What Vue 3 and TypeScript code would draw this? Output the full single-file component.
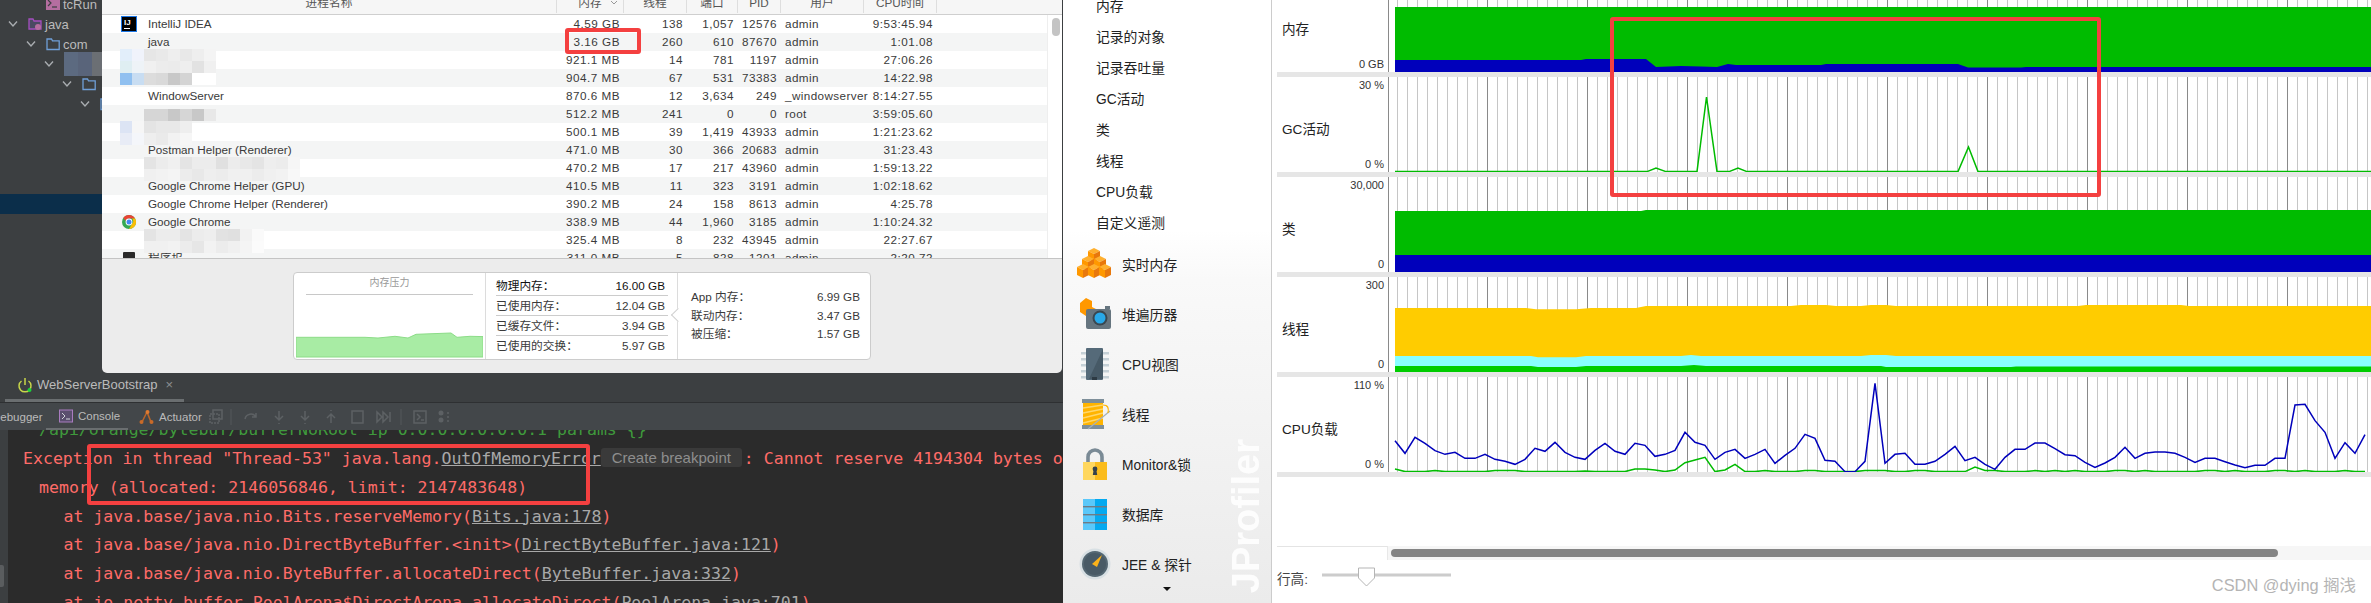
<script setup lang="ts">
type Proc = {
  icon?: "ij" | "chrome" | "dock";
  name: string;
  mem: string;
  threads: string;
  ports: string;
  pid: string;
  user: string;
  cpu: string;
};

// 活动监视器的进程表（被打码的行 name 留空）
const procs: Proc[] = [
  { icon: "ij", name: "IntelliJ IDEA", mem: "4.59 GB", threads: "138", ports: "1,057", pid: "12576", user: "admin", cpu: "9:53:45.94" },
  { name: "java", mem: "3.16 GB", threads: "260", ports: "610", pid: "87670", user: "admin", cpu: "1:01.08" },
  { name: "", mem: "921.1 MB", threads: "14", ports: "781", pid: "1197", user: "admin", cpu: "27:06.26" },
  { name: "", mem: "904.7 MB", threads: "67", ports: "531", pid: "73383", user: "admin", cpu: "14:22.98" },
  { name: "WindowServer", mem: "870.6 MB", threads: "12", ports: "3,634", pid: "249", user: "_windowserver", cpu: "8:14:27.55" },
  { name: "", mem: "512.2 MB", threads: "241", ports: "0", pid: "0", user: "root", cpu: "3:59:05.60" },
  { name: "", mem: "500.1 MB", threads: "39", ports: "1,419", pid: "43933", user: "admin", cpu: "1:21:23.62" },
  { name: "Postman Helper (Renderer)", mem: "471.0 MB", threads: "30", ports: "366", pid: "20683", user: "admin", cpu: "31:23.43" },
  { name: "", mem: "470.2 MB", threads: "17", ports: "217", pid: "43960", user: "admin", cpu: "1:59:13.22" },
  { name: "Google Chrome Helper (GPU)", mem: "410.5 MB", threads: "11", ports: "323", pid: "3191", user: "admin", cpu: "1:02:18.62" },
  { name: "Google Chrome Helper (Renderer)", mem: "390.2 MB", threads: "24", ports: "158", pid: "8613", user: "admin", cpu: "4:25.78" },
  { icon: "chrome", name: "Google Chrome", mem: "338.9 MB", threads: "44", ports: "1,960", pid: "3185", user: "admin", cpu: "1:10:24.32" },
  { name: "", mem: "325.4 MB", threads: "8", ports: "232", pid: "43945", user: "admin", cpu: "22:27.67" },
  { icon: "dock", name: "程序坞", mem: "311.0 MB", threads: "5", ports: "828", pid: "1201", user: "admin", cpu: "2:20.72" },
];

// 马赛克：left/top 相对表格内容区
const mosaics = [
  {
    left: 18,
    top: 34,
    cells: [
      ["#e2eefa", "#f0f3fb", "#e6e6e6", "#e9e9e9", "#eeeeee", "#e8e8e8", "#eeeeee", "#f4f4f4"],
      ["#dfeef2", "#eef3f7", "#f0f0f0", "#ececec", "#ebebeb", "#eeeeee", "#e2e2e2", "#f0f0f0"],
      ["#90c0f0", "#c8ddf2", "#dcdcdc", "#d9d9d9", "#c8c8c8", "#d4d4d4", "#ffffff", "#ffffff"],
    ],
  },
  {
    left: 42,
    top: 94,
    cells: [["#d6d6d6", "#d6d6d6", "#c8c8c8", "#d6d6d6", "#c8c8c8", "#e8e8e8"]],
  },
  {
    left: 18,
    top: 106,
    cells: [
      ["#dce4f4", "#f6f6f6", "#e4e4e4", "#e8e8e8", "#e8e8e8", "#eeeeee"],
      ["#e8ecf6", "#f4f6fa", "#eeeeee", "#eaeaea", "#f2f2f2", "#f6f6f6"],
    ],
  },
  {
    left: 42,
    top: 142,
    cells: [
      ["#e4e4e4", "#ececec", "#f0f0f0", "#e4e4e4", "#ececec", "#ececec", "#e0e0e0", "#ececec", "#e8e8e8", "#e4e4e4", "#eeeeee", "#ececec", "#f6f6f6"],
      ["#f0f0f0", "#f2f2f2", "#f4f4f4", "#ececec", "#e8e8e8", "#eeeeee", "#ececec", "#f0f0f0", "#f0f0f0", "#ececec", "#f0f0f0", "#f2f2f2", "#f8f8f8"],
    ],
  },
  {
    left: 42,
    top: 214,
    cells: [
      ["#e4e4e4", "#ececec", "#ececec", "#e4e4e4", "#ececec", "#eeeeee", "#e2e2e2", "#e0e0e0", "#f2f2f2", "#fafafa"],
      ["#f0f0f0", "#f0f0f0", "#f2f2f2", "#ececec", "#e6e6e6", "#f2f2f2", "#ececec", "#f0f0f0", "#f4f4f4", "#fbfbfb"],
    ],
  },
];

const physStats = [
  { label: "物理内存：", value: "16.00 GB" },
  { label: "已使用内存：", value: "12.04 GB" },
  { label: "已缓存文件：", value: "3.94 GB" },
  { label: "已使用的交换：", value: "5.97 GB" },
];
const appStats = [
  { label: "App 内存：", value: "6.99 GB" },
  { label: "联动内存：", value: "3.47 GB" },
  { label: "被压缩：", value: "1.57 GB" },
];

const tree = [
  { depth: 1, kind: "run", label: "tcRun", arrow: false },
  { depth: 0, kind: "src", label: "java", arrow: true },
  { depth: 1, kind: "folder", label: "com", arrow: true },
  { depth: 2, kind: "blur", label: "", arrow: true },
  { depth: 3, kind: "folder", label: "", arrow: true },
  { depth: 4, kind: "folder", label: "", arrow: true },
];

const subItems = ["内存", "记录的对象", "记录吞吐量", "GC活动", "类", "线程", "CPU负载", "自定义遥测"];
const navItems = [
  { key: "cubes", label: "实时内存" },
  { key: "camera", label: "堆遍历器" },
  { key: "chip", label: "CPU视图" },
  { key: "spool", label: "线程" },
  { key: "lock", label: "Monitor&锁" },
  { key: "db", label: "数据库" },
  { key: "gauge", label: "JEE & 探针" },
];
const cubes = [
  [17, 0],
  [11, 8],
  [23, 8],
  [6, 16],
  [17, 16],
  [28, 16],
];

// 图表坐标：x 为页面横坐标，y 为页面纵坐标，这里换算成每行自己的坐标
const left = 1388;
const pts = (top: number, list: number[][]) =>
  list.map(([x, y]) => `${x - left},${y - top}`).join(" ");

const cpuHead = [
  572, 610, 562, 580, 602, 613, 607, 625, 625, 613, 628, 634, 643, 628, 595, 604, 577, 607, 622, 628, 601, 580, 604,
  613, 580, 586, 619, 613, 601, 547, 577, 586, 628, 607, 598, 625, 613, 598, 640, 616, 595, 553, 565, 631, 634, 665,
  665, 634, 400, 640, 613, 610, 643, 643, 634, 613, 589,
].map((v) => 250 + v / 3);
const cpuTail = [
  272, 262, 283, 298, 262, 238, 238, 219, 219, 236, 254, 257, 277, 292, 279, 262, 232, 265, 250, 246, 246, 250, 262,
  277, 265, 265, 275, 285, 293, 286, 286, 265, 265, 105, 103, 152, 187, 265, 218, 250, 194,
].map((v) => 370 + v / 3);
const cpuLine = [...cpuHead, ...cpuTail].map((y, i) => [1394 + i * 10, y]);

const gcBumps: Record<number, number> = {
  0: 469, 4: 470.5, 10: 470.6, 11: 470.6, 12: 470.6, 19: 471, 24: 469, 25: 469, 26: 470, 28: 470, 29: 462.7,
  30: 460, 31: 457.3, 33: 470, 34: 464.3, 37: 470.5, 41: 470.5, 42: 470.5, 47: 470.6, 48: 470.6, 49: 470.6,
  52: 470.6, 53: 470.6, 58: 467, 59: 470.5, 60: 470.5, 64: 470.6, 66: 470.5, 68: 470.5, 72: 470.6, 73: 470.6,
  75: 470.6, 81: 470.6, 82: 470.6, 84: 470.5, 88: 470.6, 89: 470.6, 91: 470.6, 95: 470.6,
};
const cpuGc = cpuLine.map(([x], i) => [x, gcBumps[i] ?? 471.6]);

const rows = [
  {
    name: "内存", top: -23, max: "", min: "0 GB",
    fills: [
      { color: "#00bb00", points: pts(-23, [[1394, 7], [2371, 7], [2371, 72], [1394, 72]]) },
      {
        color: "#0000bb",
        points: pts(-23, [
          [1394, 60], [1580, 60], [1585, 59], [1645, 59], [1655, 67], [1680, 66], [1700, 66.5], [1716, 67], [1727, 64],
          [1735, 65], [1820, 65], [1825, 64], [1957, 64], [1967, 67.5], [2020, 67.5], [2025, 67], [2371, 67], [2371, 72], [1394, 72],
        ]),
      },
    ],
    lines: [],
  },
  {
    name: "GC活动", top: 77, max: "30 %", min: "0 %",
    fills: [],
    lines: [
      {
        color: "#00bb00",
        points: pts(77, [
          [1394, 171.6], [1646, 171.6], [1655, 168], [1665, 171.6], [1696, 171.6], [1705.5, 97], [1716, 171.6], [1728, 171.6],
          [1737, 168], [1746, 171.6], [1957, 171.6], [1967.5, 147], [1977, 171.6], [2371, 171.6],
        ]),
      },
    ],
  },
  {
    name: "类", top: 177, max: "30,000", min: "0",
    fills: [
      { color: "#00bb00", points: pts(177, [[1394, 211], [1640, 211], [1645, 210], [2371, 210], [2371, 272], [1394, 272]]) },
      { color: "#0000bb", points: pts(177, [[1394, 255], [2371, 255], [2371, 272], [1394, 272]]) },
    ],
    lines: [],
  },
  {
    name: "线程", top: 277, max: "300", min: "0",
    fills: [
      {
        color: "#ffcc00",
        points: pts(277, [
          [1394, 308], [1525, 308], [1535, 309.3], [1575, 309.3], [1590, 308], [1635, 308], [1645, 306], [1790, 306], [1800, 305],
          [1825, 305], [1835, 306], [1860, 306], [1870, 305], [1885, 305], [1895, 306], [2077, 306], [2085, 305], [2180, 305],
          [2188, 306], [2371, 306], [2371, 372], [1394, 372],
        ]),
      },
      {
        color: "#88ffff",
        points: pts(277, [
          [1394, 356], [1530, 356], [1537, 357.3], [1575, 357.3], [1585, 356], [1680, 356], [1690, 355], [1700, 356], [1860, 356],
          [1870, 355], [1885, 355], [1895, 356], [2371, 356], [2371, 372], [1394, 372],
        ]),
      },
      {
        color: "#00cc00",
        points: pts(277, [
          [1394, 366], [1530, 366], [1537, 367], [1575, 367], [1585, 366], [1680, 366], [1693, 365], [1705, 366], [1880, 366],
          [1885, 367], [2010, 367], [2015, 366.6], [2371, 366.6], [2371, 372], [1394, 372],
        ]),
      },
    ],
    lines: [],
  },
  {
    name: "CPU负载", top: 377, max: "110 %", min: "0 %",
    fills: [],
    lines: [
      { color: "#00bb00", points: pts(377, cpuGc) },
      { color: "#0000bb", points: pts(377, cpuLine) },
    ],
  },
];
</script>

<template>
  <div class="page">
    <!-- 左半：IDEA + 盖在上面的活动监视器 -->
    <section class="ide">
      <div class="ide-top">
        <div class="tree">
          <div v-for="(item, i) in tree" :key="i" class="tree-row" :style="{ paddingLeft: 7 + item.depth * 18 + 'px' }">
            <svg class="chev" viewBox="0 0 12 8" width="12" height="8">
              <polyline v-if="item.arrow" points="2,1.5 6,6 10,1.5" fill="none" stroke="#a9adb0" stroke-width="1.4" />
            </svg>
            <svg v-if="item.kind === 'run'" class="tree-ico" viewBox="0 0 14 14" width="14" height="14">
              <rect y="1" width="14" height="12" fill="#b56ea0" />
              <polyline points="2,3 5,6 2,9" fill="none" stroke="#3c3f41" stroke-width="1.2" />
              <line x1="6" y1="10" x2="11" y2="10" stroke="#3c3f41" stroke-width="1.2" />
            </svg>
            <svg v-else-if="item.kind === 'src'" class="tree-ico" viewBox="0 0 14 14" width="14" height="14">
              <path d="M1 12V2h4l1 2h7v8z" fill="#4b4a63" stroke="#a54ec0" stroke-width="1.3" />
              <circle cx="10" cy="10" r="3" fill="#b56ea0" />
            </svg>
            <svg v-else-if="item.kind === 'folder'" class="tree-ico" viewBox="0 0 14 14" width="14" height="14">
              <path d="M1 12.5V2h4.5l1 1.8h6.7v8.7z" fill="none" stroke="#6f9fd8" stroke-width="1.3" />
            </svg>
            <div v-else class="tree-blur">
              <i></i><i></i><i></i><i></i>
            </div>
            <span>{{ item.label }}</span>
          </div>
          <div class="tree-selected"></div>
        </div>

        <div class="win">
          <div class="win-head table-grid">
            <span class="h-name">进程名称</span>
            <span class="h-mem">内存<svg viewBox="0 0 8 5" width="8" height="5"><polyline points="1,1 4,4 7,1" fill="none" stroke="#999" /></svg></span>
            <span>线程</span>
            <span>端口</span>
            <span>PID</span>
            <span>用户</span>
            <span>CPU时间</span>
          </div>
          <div class="win-body">
            <div class="proc-list">
              <div v-for="p in procs" :key="p.pid" class="proc table-grid">
                <span class="p-icon">
                  <svg v-if="p.icon === 'ij'" viewBox="0 0 16 16" width="16" height="16">
                    <rect x="0.5" y="0.5" width="15" height="15" fill="#000" stroke="#1e78e6" />
                    <text x="3" y="9" fill="#fff" font-size="8" font-weight="700" font-family="Liberation Sans">IJ</text>
                    <rect x="3" y="12" width="6" height="1" fill="#fff" />
                  </svg>
                  <svg v-else-if="p.icon === 'chrome'" viewBox="0 0 16 16" width="16" height="16">
                    <circle cx="8" cy="8" r="7" fill="#34a853" />
                    <path d="M8 1a7 7 0 0 1 6.1 3.5H8a3.5 3.5 0 0 0-3.3 2.3L2.2 4A7 7 0 0 1 8 1z" fill="#ea4335" />
                    <path d="M14.1 4.5A7 7 0 0 1 8 15l3-5.2a3.5 3.5 0 0 0 0-5.3z" fill="#fbbc05" />
                    <circle cx="8" cy="8" r="3.4" fill="#fff" />
                    <circle cx="8" cy="8" r="2.5" fill="#4285f4" />
                  </svg>
                  <svg v-else-if="p.icon === 'dock'" viewBox="0 0 16 16" width="16" height="16">
                    <rect x="2" y="2" width="12" height="12" rx="1" fill="#2a2a2a" />
                  </svg>
                </span>
                <span class="p-name">{{ p.name }}</span>
                <span class="num">{{ p.mem }}</span>
                <span class="num">{{ p.threads }}</span>
                <span class="num">{{ p.ports }}</span>
                <span class="num">{{ p.pid }}</span>
                <span class="p-user">{{ p.user }}</span>
                <span class="num">{{ p.cpu }}</span>
              </div>
              <div
                v-for="(m, i) in mosaics"
                :key="i"
                class="mosaic"
                :style="{ left: m.left + 'px', top: m.top + 'px' }"
              >
                <div v-for="(line, j) in m.cells" :key="j" class="mosaic-line">
                  <i v-for="(c, k) in line" :key="k" :style="{ background: c }"></i>
                </div>
              </div>
            </div>
            <div class="win-scroll"><div class="win-thumb"></div></div>
          </div>
          <div class="win-foot">
            <div class="mem-card">
              <div class="pressure">
                <div class="pressure-title">内存压力</div>
                <svg class="pressure-graph" viewBox="0 0 187 26" width="187" height="26">
                  <polygon
                    points="0,5.3 36,5.3 69,5.3 82,6 99,4.3 112,6 120,2.3 155,1 161,5.3 174,4.3 187,4.6 187,25 0,25"
                    fill="#a8eca4"
                    stroke="#8cdc88"
                  />
                </svg>
              </div>
              <div class="phys">
                <div v-for="s in physStats" :key="s.label" class="phys-row">
                  <span>{{ s.label }}</span><span>{{ s.value }}</span>
                </div>
              </div>
              <div class="app">
                <div v-for="s in appStats" :key="s.label" class="app-row">
                  <span>{{ s.label }}</span><span>{{ s.value }}</span>
                </div>
              </div>
            </div>
          </div>
        </div>
      </div>

      <div class="tool">
        <div class="tool-tabs">
          <div class="run-tab">
            <svg viewBox="0 0 16 16" width="16" height="16">
              <path d="M4.5 4a6 6 0 1 0 7 0" fill="none" stroke="#c8d64a" stroke-width="1.5" />
              <line x1="8" y1="1" x2="8" y2="8" stroke="#c8d64a" stroke-width="1.5" />
              <circle cx="12.5" cy="13" r="2" fill="#19d43a" />
            </svg>
            <span>WebServerBootstrap</span>
            <b>×</b>
          </div>
        </div>
        <div class="tool-strip">
          <span class="strip-cut">Debugger</span>
          <div class="strip-tab strip-active">
            <svg viewBox="0 0 14 14" width="14" height="14">
              <rect x="0.5" y="1" width="13" height="12" fill="#5a4e6e" stroke="#a97cc0" />
              <polyline points="3,4 6,7 3,10" fill="none" stroke="#d0d4d8" />
              <line x1="7" y1="10" x2="11" y2="10" stroke="#d0d4d8" />
            </svg>
            <span>Console</span>
          </div>
          <div class="strip-tab strip-actuator">
            <svg viewBox="0 0 15 16" width="15" height="16">
              <path d="M8 3 3 13M8 3l4 10M3 13h0" stroke="#b8652a" stroke-width="1.6" fill="none" />
              <circle cx="8.5" cy="3" r="2" fill="#e07a30" />
              <circle cx="2.5" cy="13" r="2" fill="#c96a28" />
              <circle cx="12.5" cy="13" r="2" fill="#c96a28" />
            </svg>
            <span>Actuator</span>
          </div>
          <svg class="strip-tools" viewBox="0 0 240 16" width="240" height="16">
            <g fill="none" stroke="#5d6164" stroke-width="1.5">
              <rect x="4" y="1" width="9" height="9" />
              <rect x="1" y="5" width="9" height="9" stroke-dasharray="2 1" />
              <path d="M36 10a6 6 0 0 1 11-2M47 4v4h-4" />
              <path d="M70 2v9M66 7l4 4 4-4M70 14v1" />
              <path d="M96 2v9M92 7l4 4 4-4M96 14v1" />
              <path d="M122 14V5M118 9l4-4 4 4M122 1v1" />
              <rect x="143" y="2" width="11" height="12" />
              <path d="M168 3l5 5-5 5zM174 3l5 5-5 5zM181 3v10" />
              <rect x="205" y="2" width="12" height="12" />
              <path d="M208 5l3 3-3 3M212 11h3" />
              <path d="M238 4h2M238 8h2M238 12h2" />
            </g>
            <line x1="22" y1="0" x2="22" y2="16" stroke="#55585a" />
            <line x1="192" y1="0" x2="192" y2="16" stroke="#55585a" />
            <circle cx="232" cy="4" r="2.5" fill="#5d6164" />
            <circle cx="232" cy="11" r="2.5" fill="#5d6164" />
          </svg>
        </div>
        <div class="console-wrap">
          <div class="gutter"><div class="gutter-thumb"></div></div>
          <div class="console">
            <div class="ln ln-req">/api/orange/bytebuf/bufferNoRoot ip 0.0.0.0.0.0.0.1 params {}</div>
            <div class="ln ln-exc">Exception in thread "Thread-53" java.lang.<u>OutOfMemoryError</u><em class="bp">Create breakpoint</em>: Cannot reserve 4194304 bytes of direct buffer</div>
            <div class="ln ln-mem">memory (allocated: 2146056846, limit: 2147483648)</div>
            <div class="ln ln-at">at java.base/java.nio.Bits.reserveMemory(<u>Bits.java:178</u>)</div>
            <div class="ln ln-at">at java.base/java.nio.DirectByteBuffer.&lt;init&gt;(<u>DirectByteBuffer.java:121</u>)</div>
            <div class="ln ln-at">at java.base/java.nio.ByteBuffer.allocateDirect(<u>ByteBuffer.java:332</u>)</div>
            <div class="ln ln-at">at io.netty.buffer.PoolArena$DirectArena.allocateDirect(<u>PoolArena.java:701</u>)</div>
          </div>
        </div>
      </div>
    </section>

    <!-- 右半：JProfiler -->
    <aside class="side">
      <div class="sub-list">
        <div v-for="s in subItems" :key="s" class="sub-item">{{ s }}</div>
      </div>
      <div v-for="n in navItems" :key="n.key" class="nav-item">
        <svg class="nav-ico" viewBox="0 0 36 32" width="36" height="32">
          <g v-if="n.key === 'cubes'">
            <g v-for="(c, i) in cubes" :key="i">
              <polygon :points="`${c[0]},${c[1]} ${c[0] + 6},${c[1] + 3} ${c[0]},${c[1] + 6} ${c[0] - 6},${c[1] + 3}`" fill="#ffb02e" />
              <polygon :points="`${c[0] - 6},${c[1] + 3} ${c[0]},${c[1] + 6} ${c[0]},${c[1] + 14} ${c[0] - 6},${c[1] + 11}`" fill="#ff9800" />
              <polygon :points="`${c[0] + 6},${c[1] + 3} ${c[0]},${c[1] + 6} ${c[0]},${c[1] + 14} ${c[0] + 6},${c[1] + 11}`" fill="#e8780c" />
            </g>
          </g>
          <g v-else-if="n.key === 'camera'">
            <polygon points="9,0 15,3 15,9 21,12 21,16 9,18 3,14 3,5" fill="#ff9800" />
            <rect x="9" y="11" width="25" height="20" rx="2" fill="#66757f" />
            <rect x="28" y="8" width="5" height="3" fill="#66757f" />
            <circle cx="23" cy="20" r="7.5" fill="#3a4750" />
            <circle cx="23" cy="20" r="5.5" fill="#29a8e8" />
          </g>
          <g v-else-if="n.key === 'chip'">
            <g fill="#c5d0d6">
              <rect x="4" y="4" width="28" height="2.5" />
              <rect x="4" y="10" width="28" height="2.5" />
              <rect x="4" y="16" width="28" height="2.5" />
              <rect x="4" y="22" width="28" height="2.5" />
              <rect x="4" y="28" width="28" height="2.5" />
            </g>
            <rect x="9" y="0" width="17" height="32" rx="1" fill="#556a79" />
            <polygon points="26,1 26,31 12,31" fill="#465966" />
            <rect x="15" y="29" width="5" height="3" fill="#2d3a43" />
          </g>
          <g v-else-if="n.key === 'spool'">
            <rect x="6" y="5" width="20" height="22" fill="#ffb400" />
            <path d="M6 10 26 7M6 15 26 11M6 20 26 15M6 25 26 20" stroke="#ffd76b" stroke-width="1.4" />
            <rect x="5" y="1" width="22" height="4" fill="#7e8f9a" />
            <rect x="5" y="27" width="22" height="4" fill="#7e8f9a" />
            <line x1="11" y1="31" x2="33" y2="13" stroke="#a5b0b8" stroke-width="1.2" />
            <path d="M26 7c5 0 6 3 5 8" stroke="#ffb400" stroke-width="1.2" fill="none" />
          </g>
          <g v-else-if="n.key === 'lock'">
            <path d="M11 16V9a7 7 0 0 1 14 0v7" fill="none" stroke="#7a8a95" stroke-width="3.6" />
            <rect x="6" y="14" width="12" height="18" fill="#ffd75e" />
            <rect x="18" y="14" width="12" height="18" fill="#fbbc1c" />
            <circle cx="18" cy="21" r="2.4" fill="#36424b" />
            <polygon points="16.6,22 19.4,22 20.2,27 15.8,27" fill="#36424b" />
          </g>
          <g v-else-if="n.key === 'db'">
            <rect x="6" y="1" width="12" height="31" fill="#5ac8fa" />
            <rect x="18" y="1" width="12" height="31" fill="#04a9f0" />
            <g fill="#6f7b84">
              <rect x="6" y="8" width="24" height="1.4" />
              <rect x="6" y="16" width="24" height="1.4" />
              <rect x="6" y="24" width="24" height="1.4" />
            </g>
          </g>
          <g v-else>
            <circle cx="18" cy="16" r="15.5" fill="#d8e0e4" />
            <circle cx="18" cy="16" r="13" fill="#546773" />
            <circle cx="18" cy="16" r="11" fill="#485a66" />
            <polygon points="25,7 20,19 15,16" fill="#fbb21a" />
          </g>
        </svg>
        <span>{{ n.label }}</span>
      </div>
      <div class="more"></div>
      <div class="brand">JProfiler</div>
    </aside>

    <main class="charts">
      <div class="chart-rows">
        <div v-for="r in rows" :key="r.name" class="chart-row">
          <div class="row-side">
            <div class="tick">{{ r.max }}</div>
            <div class="row-name">{{ r.name }}</div>
            <div class="tick">{{ r.min }}</div>
          </div>
          <svg class="plot" viewBox="0 0 983 95" width="983" height="95">
            <polygon v-for="(f, i) in r.fills" :key="i" :points="f.points" :fill="f.color" />
            <polyline
              v-for="(l, i) in r.lines"
              :key="i"
              :points="l.points"
              fill="none"
              :stroke="l.color"
              stroke-width="1.5"
            />
          </svg>
        </div>
      </div>
      <div class="h-scroll">
        <div class="h-corner"></div>
        <div class="h-track"><div class="h-thumb"></div></div>
      </div>
      <div class="bottom-bar">
        <span class="row-h">行高:</span>
        <svg class="slider" viewBox="0 0 130 20" width="130" height="20">
          <rect x="0" y="6.5" width="129" height="3" fill="#cccccc" />
          <polygon points="36.5,1 52.5,1 52.5,11 44.5,19 36.5,11" fill="#fff" stroke="#b5b5b5" />
        </svg>
        <span class="csdn">CSDN @dying 搁浅</span>
      </div>
    </main>

    <!-- 截图上的红色标注框 -->
    <div class="mark mark-java"></div>
    <div class="mark mark-exc"></div>
    <div class="mark mark-chart"></div>
  </div>
</template>

<style scoped>
.page {
  position: relative;
  display: flex;
  width: 2371px;
  height: 603px;
  overflow: hidden;
  background: #fff;
  font-family: "Liberation Sans", "Noto Sans CJK SC", sans-serif;
}

/* ---------- IDE ---------- */
.ide {
  display: flex;
  flex-direction: column;
  flex: none;
  width: 1063px;
  height: 603px;
  background: #3c3f41;
}
.ide-top {
  display: flex;
  flex: none;
  height: 373px;
}
.tree {
  position: relative;
  flex: none;
  width: 102px;
  margin-top: -6px;
  overflow: hidden;
  color: #bbbbbb;
  font-size: 13px;
}
.tree-row {
  display: flex;
  align-items: center;
  height: 20px;
  white-space: nowrap;
}
.chev {
  flex: none;
  width: 12px;
  margin-right: 9px;
}
.tree-ico {
  flex: none;
  margin-right: 3px;
}
.tree-blur {
  display: flex;
  flex: none;
  height: 24px;
}
.tree-blur i {
  width: 14px;
  background: #5c6a80;
}
.tree-blur i:nth-child(2) {
  background: #59647a;
}
.tree-blur i:nth-child(3) {
  background: #6b6f74;
}
.tree-blur i:nth-child(4) {
  background: #a8a8a8;
}
.tree-selected {
  height: 20px;
  margin-top: 80px;
  background: #0b2e4a;
}

.win {
  display: flex;
  flex-direction: column;
  flex: none;
  width: 960px;
  height: 373px;
  overflow: hidden;
  border-radius: 0 0 5px 5px;
  background: #ececec;
  color: #3a3a3a;
  font-size: 11.7px;
}
.table-grid {
  display: grid;
  grid-template-columns: 46px 409px 67px 63px 51px 43px 83px 73px;
}
.win-head {
  flex: none;
  height: 14px;
  overflow: hidden;
  border-bottom: 1px solid #cfcfcf;
  background: #f6f6f6;
  color: #555;
  line-height: 5px;
  text-align: center;
}
.win-head span {
  height: 13px;
  border-right: 1px solid #dedede;
}
.h-name {
  grid-column: span 2;
}
.h-mem {
  position: relative;
}
.h-mem svg {
  position: absolute;
  top: 0;
  right: 5px;
}
.win-body {
  display: flex;
  flex: none;
  height: 243px;
  border-bottom: 1px solid #c4c4c4;
  background: #fff;
}
.proc-list {
  position: relative;
  flex: none;
  width: 945px;
  overflow: hidden;
}
.proc {
  height: 18px;
  line-height: 18px;
  white-space: nowrap;
}
.proc:nth-child(even) {
  background: #f4f5f5;
}
.p-icon {
  display: flex;
  align-items: center;
  padding-left: 19px;
}
.num {
  padding-right: 4px;
  letter-spacing: 0.5px;
  text-align: right;
}
.p-user {
  padding-left: 4px;
  letter-spacing: 0.4px;
}
.mosaic {
  position: absolute;
  filter: blur(0.7px);
}
.mosaic-line {
  display: flex;
}
.mosaic-line i {
  width: 12px;
  height: 12px;
}
.win-scroll {
  flex: 1;
  padding: 3px 3px 0 4px;
  border-left: 1px solid #eeeeee;
}
.win-thumb {
  width: 8px;
  height: 18px;
  border-radius: 4px;
  background: #c4c4c4;
}
.win-foot {
  flex: 1;
  padding: 13px 0 0 191px;
}
.mem-card {
  display: flex;
  width: 578px;
  height: 88px;
  overflow: hidden;
  border: 1px solid #cccccc;
  border-radius: 4px;
  background: #fff;
  box-sizing: border-box;
}
.pressure {
  display: flex;
  flex-direction: column;
  flex: none;
  width: 192px;
  padding: 0 2px 1px;
  box-sizing: border-box;
  border-right: 1px solid #dcdcdc;
}
.pressure-title {
  height: 21px;
  margin: 0 10px;
  border-bottom: 1px solid #c8c8c8;
  color: #999;
  font-size: 10px;
  line-height: 20px;
  text-align: center;
}
.pressure-graph {
  margin-top: auto;
}
.phys {
  flex: none;
  width: 192px;
  padding: 3px 9px 0 10px;
  box-sizing: border-box;
  border-right: 1px solid #dcdcdc;
}
.phys-row {
  display: flex;
  justify-content: space-between;
  height: 20px;
  padding-right: 3px;
  border-bottom: 1px solid #cccccc;
  box-sizing: border-box;
  line-height: 20px;
}
.phys-row:last-child {
  border-bottom: none;
}
.phys-row:first-child {
  color: #111;
}
.app {
  position: relative;
  display: flex;
  flex: 1;
  flex-direction: column;
  justify-content: center;
  padding: 0 10px 0 13px;
}
.app::before {
  content: "";
  position: absolute;
  top: 37px;
  left: -5px;
  width: 9px;
  height: 9px;
  border-bottom: 1px solid #d0d0d0;
  border-left: 1px solid #d0d0d0;
  background: #fff;
  transform: rotate(45deg);
}
.app-row {
  display: flex;
  justify-content: space-between;
  height: 18.5px;
  line-height: 18.5px;
}

/* 底部 Run 工具窗口 */
.tool {
  display: flex;
  flex-direction: column;
  flex: 1;
  min-height: 0;
  color: #bbbbbb;
}
.tool-tabs {
  flex: none;
  height: 30px;
  border-bottom: 1px solid #2e3032;
  box-sizing: border-box;
}
.run-tab {
  display: flex;
  align-items: center;
  gap: 4px;
  width: 179px;
  height: 29px;
  margin-left: 5px;
  padding: 0 0 3px 12px;
  border-bottom: 3px solid #6a6e70;
  box-sizing: border-box;
  font-size: 13px;
}
.run-tab b {
  margin-left: 4px;
  color: #8c8f91;
  font-weight: 400;
  font-size: 13px;
}
.tool-strip {
  display: flex;
  flex: none;
  align-items: center;
  height: 27px;
  background: #43474a;
  font-size: 11.5px;
  white-space: nowrap;
}
.strip-cut {
  width: 54px;
  margin-left: -8px;
  flex: none;
}
.strip-tab {
  display: flex;
  align-items: center;
  gap: 5px;
  height: 27px;
  box-sizing: border-box;
}
.strip-active {
  width: 82px;
  padding-left: 13px;
  border-bottom: 2px solid #6a6e70;
}
.strip-actuator {
  width: 74px;
  padding-left: 11px;
}
.strip-tools {
  flex: none;
  margin-left: 7px;
}
.console-wrap {
  display: flex;
  flex: 1;
  min-height: 0;
}
.gutter {
  position: relative;
  flex: none;
  width: 8px;
  background: #3c3f41;
}
.gutter-thumb {
  position: absolute;
  top: 135px;
  left: 0;
  width: 4px;
  height: 22px;
  border-radius: 0 2px 2px 0;
  background: #5a5d5f;
}
.console {
  flex: 1;
  min-width: 0;
  overflow: hidden;
  background: #2b2b2b;
  color: #ff6b68;
  font-family: "DejaVu Sans Mono", "Liberation Mono", monospace;
  font-size: 16.56px;
}
.ln {
  height: 28.8px;
  line-height: 28.8px;
  white-space: pre;
}
.ln u {
  color: #a8a8a8;
}
.ln-req {
  margin-top: -13.8px;
  padding-left: 31px;
  color: #3f9a3c;
}
.ln-exc {
  padding-left: 15px;
}
.ln-mem {
  padding-left: 31px;
}
.ln-at {
  padding-left: 55.5px;
}
.bp {
  display: inline-block;
  width: 141px;
  height: 19px;
  margin: 0 2px 0 0;
  border-radius: 3px;
  background: #3a3a3a;
  color: #8e8e8e;
  font-family: "Liberation Sans", sans-serif;
  font-size: 15px;
  font-style: normal;
  line-height: 19px;
  text-align: center;
  vertical-align: 1px;
}

/* ---------- JProfiler 侧栏 ---------- */
.side {
  position: relative;
  flex: none;
  width: 209px;
  height: 603px;
  overflow: hidden;
  border-right: 1px solid #cccccc;
  box-sizing: border-box;
  background: linear-gradient(#ffffff 230px, #f9f9f9 280px, #ebebeb 603px);
  color: #222;
  font-size: 13.8px;
}
.sub-list {
  margin-top: -9.5px;
  padding-left: 33px;
}
.sub-item {
  height: 31px;
  line-height: 31px;
}
.nav-item {
  display: flex;
  align-items: center;
  height: 50px;
  padding-left: 14px;
}
.nav-ico {
  flex: none;
  margin-right: 9px;
}
.more {
  width: 0;
  margin: -2px 0 0 100px;
  border-top: 4px solid #111;
  border-right: 4px solid transparent;
  border-left: 4px solid transparent;
}
.brand {
  position: absolute;
  right: 6px;
  bottom: 10px;
  color: #fff;
  font-size: 38px;
  font-weight: 700;
  line-height: 1;
  opacity: 0.9;
  transform: rotate(180deg);
  writing-mode: vertical-rl;
}

/* ---------- 图表区 ---------- */
.charts {
  display: flex;
  flex-direction: column;
  flex: none;
  width: 1099px;
  height: 603px;
  padding-left: 5px;
  box-sizing: border-box;
  overflow: hidden;
}
.chart-rows {
  flex: none;
  margin-top: -23px;
}
.chart-row {
  display: flex;
  height: 100px;
  border-bottom: 5px solid #e6e6e6;
  box-sizing: border-box;
}
.row-side {
  display: flex;
  flex-direction: column;
  flex: none;
  width: 111px;
  height: 95px;
  font-size: 11px;
  color: #333;
}
.tick {
  flex: none;
  height: 16px;
  padding-right: 4px;
  line-height: 16px;
  text-align: right;
}
.row-name {
  display: flex;
  flex: 1;
  align-items: center;
  padding: 7px 0 0 5px;
  color: #222;
  font-size: 13.6px;
}
.plot {
  flex: none;
  border-left: 1px solid #8a8a8a;
  background-image:
    repeating-linear-gradient(90deg, transparent 0 98px, #8a8a8a 98px 99px, transparent 99px 100px),
    repeating-linear-gradient(90deg, transparent 0 8px, #c6c6c6 8px 9px, transparent 9px 10px);
}
.h-scroll {
  display: flex;
  flex: none;
  height: 14px;
  margin-top: 69px;
}
.h-corner {
  flex: none;
  width: 110px;
  border-top: 1px solid #e4e4e4;
  border-right: 1px solid #e8e8e8;
}
.h-track {
  flex: 1;
  padding: 3px 0 0 3px;
  background: #f6f6f6;
}
.h-thumb {
  width: 887px;
  height: 8px;
  border-radius: 4px;
  background: #858585;
}
.bottom-bar {
  display: flex;
  flex: 1;
  align-items: center;
  padding-bottom: 7px;
  color: #444;
  font-size: 13.6px;
}
.row-h {
  width: 45px;
  flex: none;
}
.slider {
  flex: none;
  margin-top: -2px;
}
.csdn {
  margin: 12px 15px 0 auto;
  color: #b4b4b4;
  font-size: 16.4px;
}

/* ---------- 红框 ---------- */
.mark {
  position: absolute;
  border: 4px solid #f44040;
  border-radius: 3px;
  box-sizing: border-box;
}
.mark-java {
  top: 28px;
  left: 565px;
  width: 76px;
  height: 26px;
}
.mark-exc {
  top: 444px;
  left: 87px;
  width: 503px;
  height: 61px;
}
.mark-chart {
  top: 17px;
  left: 1610px;
  width: 491px;
  height: 180px;
}
</style>

<style>
body {
  margin: 0;
}
</style>
